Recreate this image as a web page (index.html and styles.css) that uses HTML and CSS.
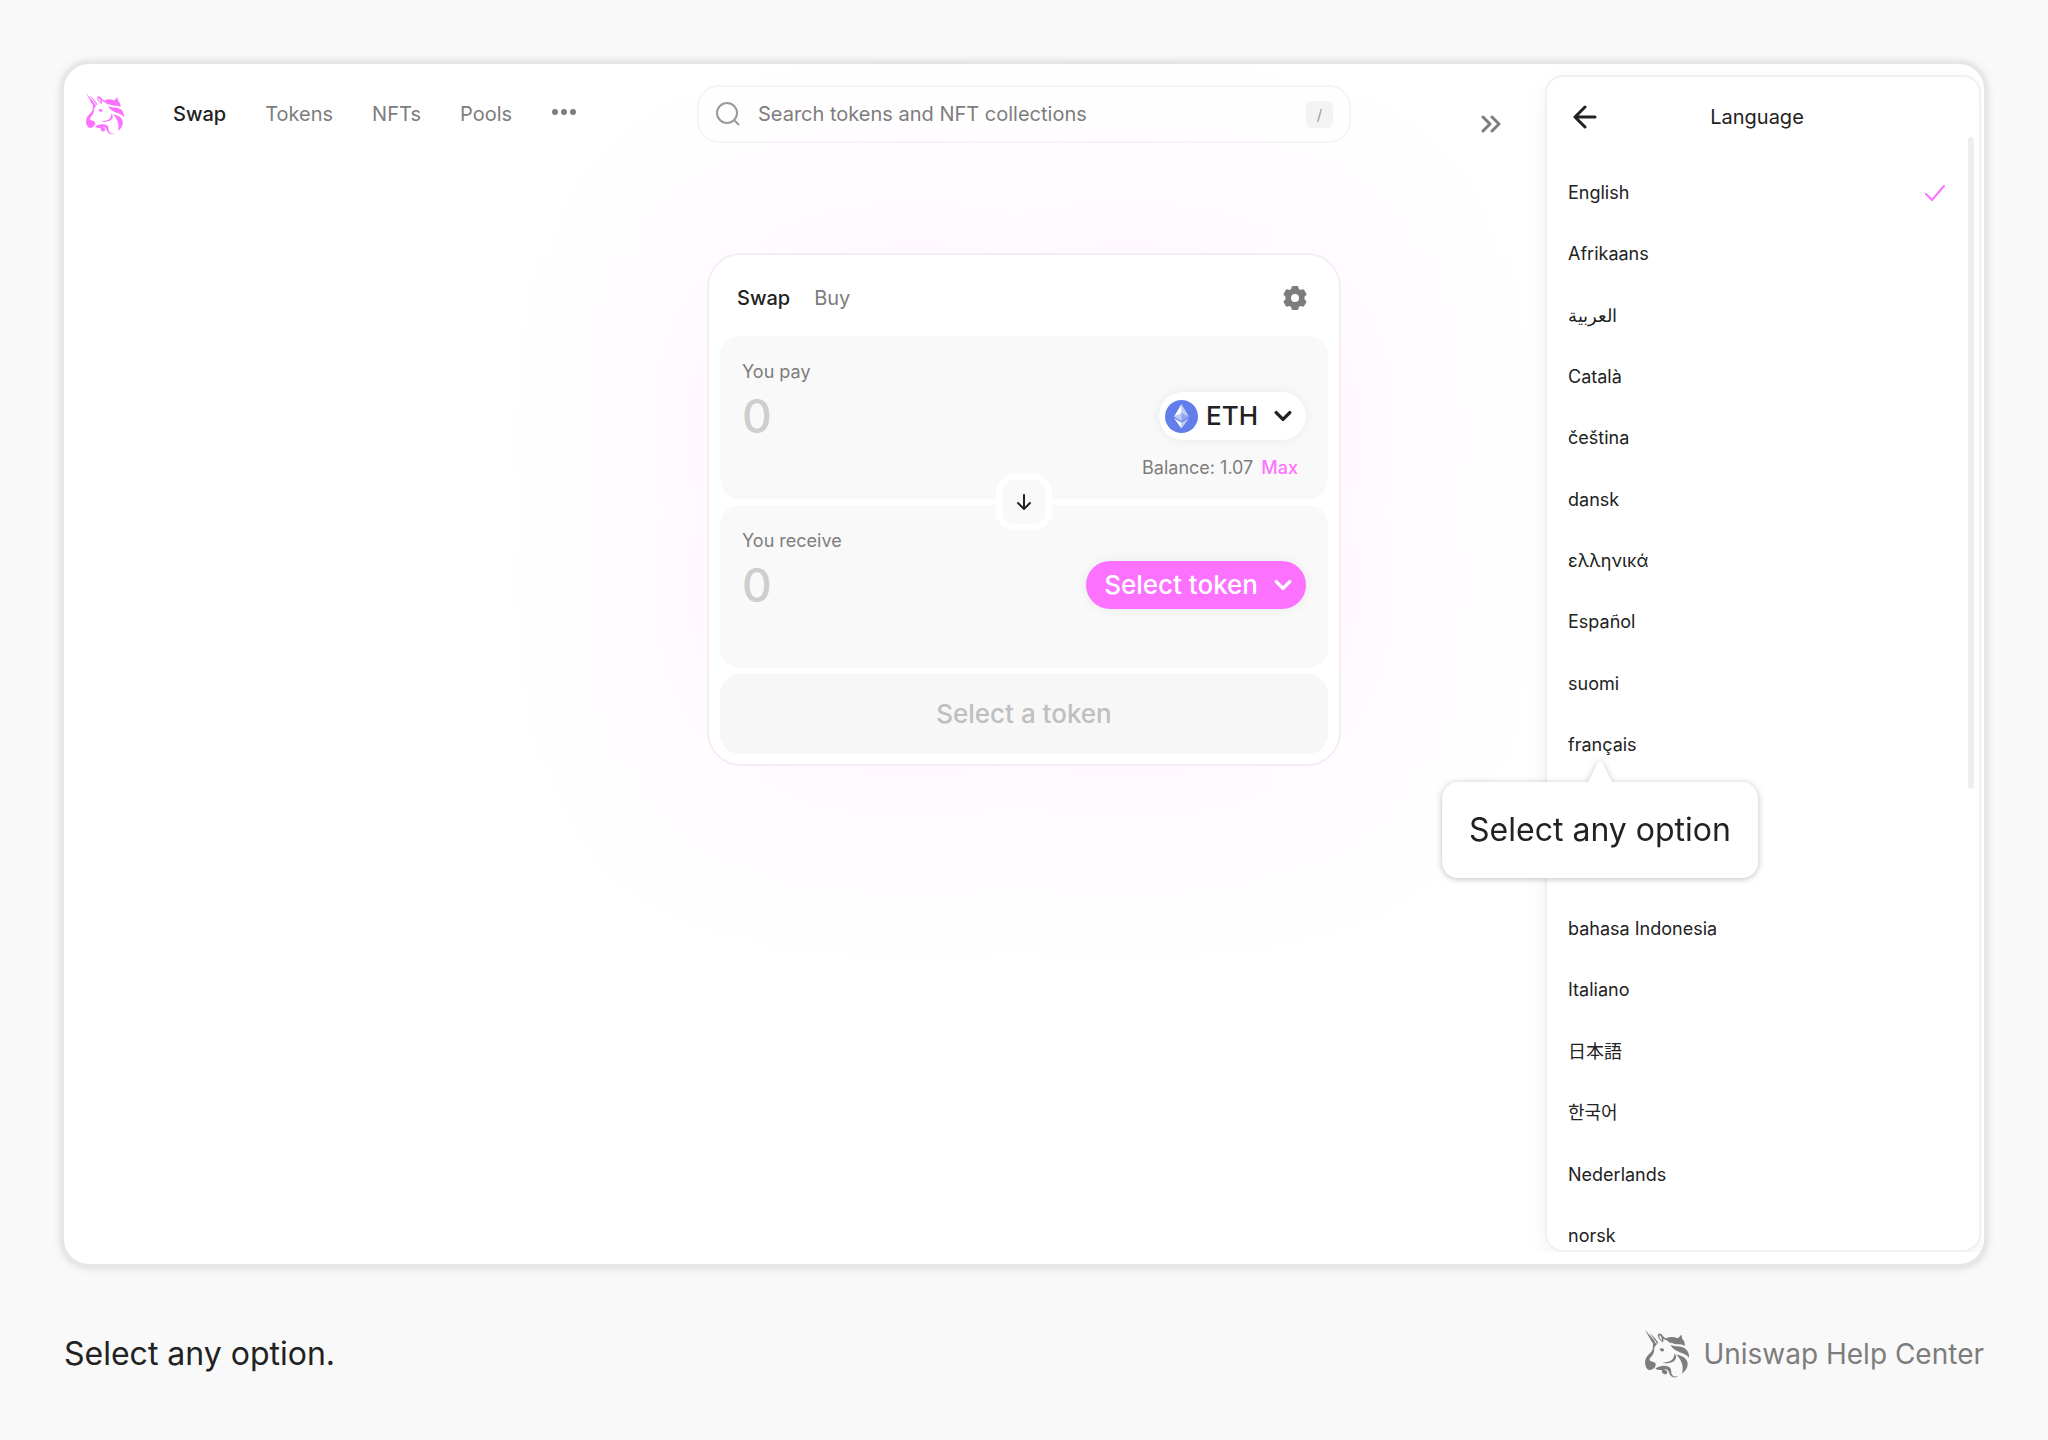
FILE: index.html
```html
<!DOCTYPE html>
<html lang="en">
<head>
<meta charset="utf-8">
<meta name="viewport" content="width=device-width, initial-scale=1">
<title>Uniswap Help Center</title>
<link rel="stylesheet" href="styles.css">
</head>
<body>
<svg class="sprite" aria-hidden="true">
  <symbol id="unicorn" viewBox="0 0 132 144">
    <path d="M0 0C8 9 18 20 27 30L31 39L36 42L33 46C30 43 25 42 22 38Z"/>
    <path d="M13 8C23 16 33 26 40 39L36 41C30 29 20 18 13 8Z"/>
    <path d="M39 13C42 8 51 11 57 22C64 26 76 31 80 40L74 38C68 32 60 29 55 27L55 37C46 33 37 23 39 13ZM43 16C42 22 46 28 51 31C51 24 48 17 43 16Z" fill-rule="evenodd"/>
    <path d="M64 24C75 20 87 20 97 25C104 21 105 17 109 14L112 27C117 31 120 39 120 48C112 43 105 43 99 43C87 43 72 36 64 24Z"/>
    <path d="M76 45C91 51 105 47 118 54C128 60 133 71 132 83C118 65 91 70 76 45Z"/>
    <path d="M94 74C111 76 126 84 128 100C128 113 123 122 111 131C116 112 113 93 94 74Z"/>
    <path d="M26 39C21 47 26 50 22 60C18 71 4 76 1 90C-1 102 1 111 7 117C11 122 18 121 23 117C31 114 34 106 31 99C26 95 17 95 13 90C17 78 24 77 27 65C28 57 27 51 33 46L34 41Z"/>
    <path d="M44 57C49 52 58 55 57 61C56 67 44 65 44 57Z"/>
    <path d="M53 99C69 101 86 98 92 87C95 80 92 75 88 70C88 80 86 87 77 92C70 96 61 96 53 99Z"/>
    <path d="M31 116C46 105 61 106 71 110C82 115 76 127 82 135C87 142 94 139 99 139C87 147 76 140 73 130C70 119 63 115 57 120C65 119 70 126 65 131C58 136 48 129 51 120C45 121 39 120 31 116Z"/>
  </symbol>
  <symbol id="chevron" viewBox="0 0 16 10">
    <path d="M2 2L8 8L14 2" fill="none" stroke="currentColor" stroke-width="3" stroke-linecap="round" stroke-linejoin="round"/>
  </symbol>
</svg>

<main class="frame">
  <section class="app">
    <header class="topbar">
      <nav class="nav" aria-label="Main">
        <a class="brand" href="#" aria-label="Uniswap"><svg class="brand-icon"><use href="#unicorn"/></svg></a>
        <a class="nav-link current" href="#">Swap</a>
        <a class="nav-link" href="#">Tokens</a>
        <a class="nav-link" href="#">NFTs</a>
        <a class="nav-link" href="#">Pools</a>
        <button class="more" type="button" aria-label="More"><svg width="26" height="12" viewBox="0 0 26 12" fill="currentColor"><circle cx="4" cy="4" r="3"/><circle cx="13" cy="4" r="3"/><circle cx="22" cy="4" r="3"/></svg></button>
      </nav>
      <label class="search">
        <svg width="24" height="24" viewBox="0 0 24 24" fill="none" stroke="#9b9b9b" stroke-width="2"><circle cx="11" cy="11" r="10"/><path d="M18 18L23 23"/></svg>
        <input type="text" aria-label="Search" placeholder="Search tokens and NFT collections">
        <kbd>/</kbd>
      </label>
      <button class="collapse" type="button" aria-label="Close panel"><svg width="20" height="18" viewBox="0 0 20 18" fill="none" stroke="currentColor" stroke-width="3" stroke-linecap="round" stroke-linejoin="round"><path d="M2 2L9 9L2 16M11 2L18 9L11 16"/></svg></button>
    </header>

    <form class="card">
      <div class="card-head">
        <button class="tab current" type="button">Swap</button>
        <button class="tab" type="button">Buy</button>
        <button class="gear" type="button" aria-label="Settings"><svg width="26" height="26" viewBox="0 0 26 26"><path fill="currentColor" fill-rule="evenodd" d="M11 1H15C16 1 16.300 1.600 16.500 2.500L16.900 4L18.300 4.900L20 4.400C21 4.100 21.700 4.200 22.200 5L24.200 8.400C24.700 9.300 24.400 9.900 23.700 10.600L22.500 11.800V14.200L23.700 15.400C24.400 16.100 24.700 16.700 24.200 17.600L22.200 21C21.700 21.800 21 21.900 20 21.600L18.300 21.100L16.900 22L16.500 23.500C16.300 24.400 16 25 15 25H11C10 25 9.700 24.400 9.500 23.500L9.100 22L7.700 21.100L6 21.600C5 21.900 4.300 21.800 3.800 21L1.800 17.600C1.300 16.700 1.600 16.100 2.300 15.400L3.500 14.200V11.800L2.300 10.600C1.600 9.900 1.300 9.300 1.800 8.400L3.800 5C4.300 4.200 5 4.100 6 4.400L7.700 4.900L9.100 4L9.500 2.500C9.700 1.600 10 1 11 1ZM13 9A4 4 0 1 0 13 17A4 4 0 1 0 13 9Z"/></svg></button>
      </div>
      <div class="amount">
        <label for="pay">You pay</label>
        <div class="amount-row">
          <input id="pay" type="text" placeholder="0">
          <button class="token" type="button">
            <svg width="33" height="33" viewBox="0 0 33 33"><circle cx="16.500" cy="16.500" r="16.500" fill="#627eea"/><path fill="#fff" fill-opacity=".6" d="M16.500 4V13.200L24 16.700ZM16.500 22.600V28.600L24 18.200Z"/><path fill="#fff" d="M16.500 4L9 16.700L16.500 13.200ZM16.500 22.600L9 18.200L16.500 28.600Z"/><path fill="#fff" fill-opacity=".3" d="M16.500 21.200L24 16.700L16.500 13.300Z"/><path fill="#fff" fill-opacity=".6" d="M9 16.700L16.500 21.200V13.300Z"/></svg>
            ETH
            <svg class="chevron"><use href="#chevron"/></svg>
          </button>
        </div>
        <div class="balance">Balance: 1.07 <button type="button">Max</button></div>
      </div>
      <button class="flip" type="button" aria-label="Switch tokens"><svg width="18" height="18" viewBox="0 0 18 18" fill="none" stroke="currentColor" stroke-width="2" stroke-linecap="round" stroke-linejoin="round"><path d="M9 2V16M3 10L9 16L15 10"/></svg></button>
      <div class="amount">
        <label for="receive">You receive</label>
        <div class="amount-row">
          <input id="receive" type="text" placeholder="0">
          <button class="token pink" type="button">Select token <svg class="chevron"><use href="#chevron"/></svg></button>
        </div>
      </div>
      <button class="submit" type="button">Select a token</button>
    </form>
  </section>

  <aside class="panel">
    <header class="panel-head">
      <button type="button" aria-label="Back"><svg width="24" height="24" viewBox="0 0 24 24" fill="none" stroke="currentColor" stroke-width="3" stroke-linecap="round" stroke-linejoin="round"><path d="M22 12H2M12 2L2 12L12 22"/></svg></button>
      <h2>Language</h2>
    </header>
    <ul class="languages">
      <li><a href="#">English</a><svg width="20" height="16" viewBox="0 0 20 16" fill="none" stroke="#fc72ff" stroke-width="2" stroke-linecap="round" stroke-linejoin="round"><path d="M1 9L7 15L19 1"/></svg></li>
      <li><a href="#">Afrikaans</a></li>
      <li><a href="#" lang="ar">العربية</a></li>
      <li><a href="#">Català</a></li>
      <li><a href="#">čeština</a></li>
      <li><a href="#">dansk</a></li>
      <li><a href="#">ελληνικά</a></li>
      <li><a href="#">Español</a></li>
      <li><a href="#">suomi</a></li>
      <li class="marked"><a href="#">français</a>
        <div class="tooltip" role="tooltip"><svg class="tip" width="28" height="24" viewBox="0 0 28 24"><path d="M1 24L11 4Q14 -1 17 4L27 24Z" fill="#fff"/></svg>Select any option</div></li>
      <li><a href="#">bahasa Indonesia</a></li>
      <li><a href="#">Italiano</a></li>
      <li><a href="#" lang="ja">日本語</a></li>
      <li><a href="#" lang="ko">한국어</a></li>
      <li><a href="#">Nederlands</a></li>
      <li><a href="#">norsk</a></li>
    </ul>
    <div class="scrollbar"></div>
  </aside>
</main>

<footer class="footer">
  <p>Select any option.</p>
  <a class="help" href="#"><svg class="help-icon"><use href="#unicorn"/></svg>Uniswap Help Center</a>
</footer>
</body>
</html>
```
FILE: styles.css
```css
* { box-sizing: border-box; }

body {
  margin: 0;
  min-height: 100vh;
  padding: 61px 61px 0;
  display: flex;
  flex-direction: column;
  background: #f9f9f9;
  color: #222;
  font: 400 18px/24px Inter, "Noto Sans CJK JP", sans-serif;
}

button {
  margin: 0;
  padding: 0;
  border: 0;
  background: none;
  color: inherit;
  font: inherit;
  cursor: pointer;
}

input {
  min-width: 0;
  padding: 0;
  border: 0;
  background: none;
  color: inherit;
  font: inherit;
  outline: 0;
}

a { color: inherit; text-decoration: none; }
svg { display: block; flex: none; }
.sprite { position: absolute; width: 0; height: 0; }

.frame {
  position: relative;
  flex: 1;
  display: flex;
  border: 3px solid #e6e6e6;
  border-radius: 28px;
  background: #fff;
  box-shadow: 0 1px 8px rgba(0, 0, 0, .14);
}

.app {
  flex: 1;
  display: flex;
  flex-direction: column;
  align-items: center;
  /* keeps the search box and the card on the centre line of the whole frame */
  margin-right: -439px;
}

.topbar {
  align-self: stretch;
  display: grid;
  grid-template-columns: 1fr 654px 1fr;
  align-items: center;
  padding: 21px 22px 0;
}

.nav { display: flex; align-items: center; font-size: 20px; color: #7d7d7d; }
.brand { margin-right: 49px; color: #fc72ff; }
.brand-icon { width: 38px; height: 42px; fill: currentColor; }
.nav-link { margin-right: 39px; }
.current { color: #222; font-weight: 500; }

.search {
  display: flex;
  align-items: center;
  gap: 18px;
  height: 58px;
  padding: 0 16px 0 17px;
  border: 2px solid #f5f5f5;
  border-radius: 22px;
  background: #fff;
  font-size: 20px;
}
.search input { flex: 1; }
.search input::placeholder { color: #7d7d7d; opacity: 1; }
.search kbd {
  width: 27px;
  border-radius: 6px;
  background: #f4f4f4;
  color: #9b9b9b;
  font: 400 15px/27px Inter, sans-serif;
  text-align: center;
}

.collapse { justify-self: start; margin: 20px 0 0 130px; color: #7d7d7d; }

.card {
  width: 634px;
  margin-top: 110px;
  padding: 11px 11px 10px;
  display: flex;
  flex-direction: column;
  gap: 6px;
  border: 2px solid #f5edf5;
  border-radius: 34px;
  background: #fff;
  box-shadow: 0 0 200px 30px rgba(252, 114, 255, .08);
}

.card-head { display: flex; align-items: center; gap: 24px; height: 64px; padding: 0 20px 0 17px; font-size: 20px; }
.tab { color: #7d7d7d; }
.tab.current { color: #222; }
.gear { margin-left: auto; color: #7d7d7d; }

.amount {
  height: 163px;
  padding: 24px 22px 0;
  border-radius: 20px;
  background: #f9f9f9;
  color: #7d7d7d;
}
.amount-row { display: flex; align-items: center; justify-content: space-between; height: 64px; }
.amount input { flex: 1; height: 48px; font-size: 46px; font-weight: 500; }
.amount input::placeholder { color: #cecece; opacity: 1; }

.token {
  display: flex;
  align-items: center;
  gap: 8px;
  height: 48px;
  padding: 0 14px 0 6px;
  border-radius: 24px;
  background: #fff;
  color: #222;
  font-size: 26px;
  font-weight: 500;
  box-shadow: 0 0 12px rgba(0, 0, 0, .07);
}
.chevron { width: 18px; height: 12px; margin-left: 8px; }
.pink { padding-left: 18px; background: #fc72ff; color: #fff; }

.balance { display: flex; justify-content: flex-end; gap: 8px; padding: 8px 8px 0 0; }
.balance button { color: #fc72ff; font-weight: 500; }

.flip {
  position: relative;
  z-index: 1;
  align-self: center;
  display: grid;
  place-items: center;
  width: 56px;
  height: 56px;
  margin: -31px 0;
  border: 6px solid #fff;
  border-radius: 18px;
  background: #f9f9f9;
}

.submit {
  height: 80px;
  border-radius: 20px;
  background: #f7f7f7;
  color: #bfbfbf;
  font-size: 26px;
  font-weight: 500;
}

.panel {
  position: relative;
  z-index: 2;
  display: flex;
  flex-direction: column;
  width: 436px;
  margin: 11px 3px 12px 0;
  border: 2px solid #f1f1f1;
  border-radius: 18px;
  background: #fff;
  box-shadow: 0 8px 24px rgba(0, 0, 0, .05);
  /* the shadow stops at the lower edge */
  clip-path: inset(-20px -1px 0 -400px);
}

.panel-head { position: relative; padding: 28px 0 0; }
.panel-head button { position: absolute; left: 26px; top: 28px; }
.panel-head h2 { margin: 0 12px 0 0; font-size: 20px; font-weight: 400; text-align: center; }

/* 18 rows: the tooltip covers the two below the marked one */
.languages {
  flex: 1;
  display: grid;
  grid-template-rows: repeat(18, 24px);
  align-content: space-between;
  margin: 0;
  padding: 52px 34px 2px 21px;
  list-style: none;
}
.languages li { display: flex; align-items: center; justify-content: space-between; }
.languages .marked {
  position: relative;
  grid-row: span 3;
  align-items: flex-start;
  justify-self: start;
}

.tooltip {
  position: absolute;
  top: 49px;
  left: 32px;
  transform: translateX(-50%);
  padding: 28px 27px;
  border-radius: 16px;
  background: #fff;
  font-size: 32px;
  line-height: 40px;
  white-space: nowrap;
  filter: drop-shadow(0 1px 3px rgba(0, 0, 0, .25));
}
.tip { position: absolute; top: -22px; left: 50%; margin-left: -14px; }

.scrollbar {
  position: absolute;
  top: 60px;
  right: 5px;
  width: 6px;
  height: 652px;
  border-radius: 3px;
  background: #eee;
}

.footer {
  display: flex;
  align-items: center;
  justify-content: space-between;
  height: 173px;
  padding: 0 3px;
  font-size: 32px;
  line-height: 40px;
}
.footer p { margin: 0; }
.help { display: flex; align-items: center; gap: 14px; color: #7d7d7d; font-size: 28px; }
.help-icon { width: 44px; height: 48px; fill: currentColor; }
```
